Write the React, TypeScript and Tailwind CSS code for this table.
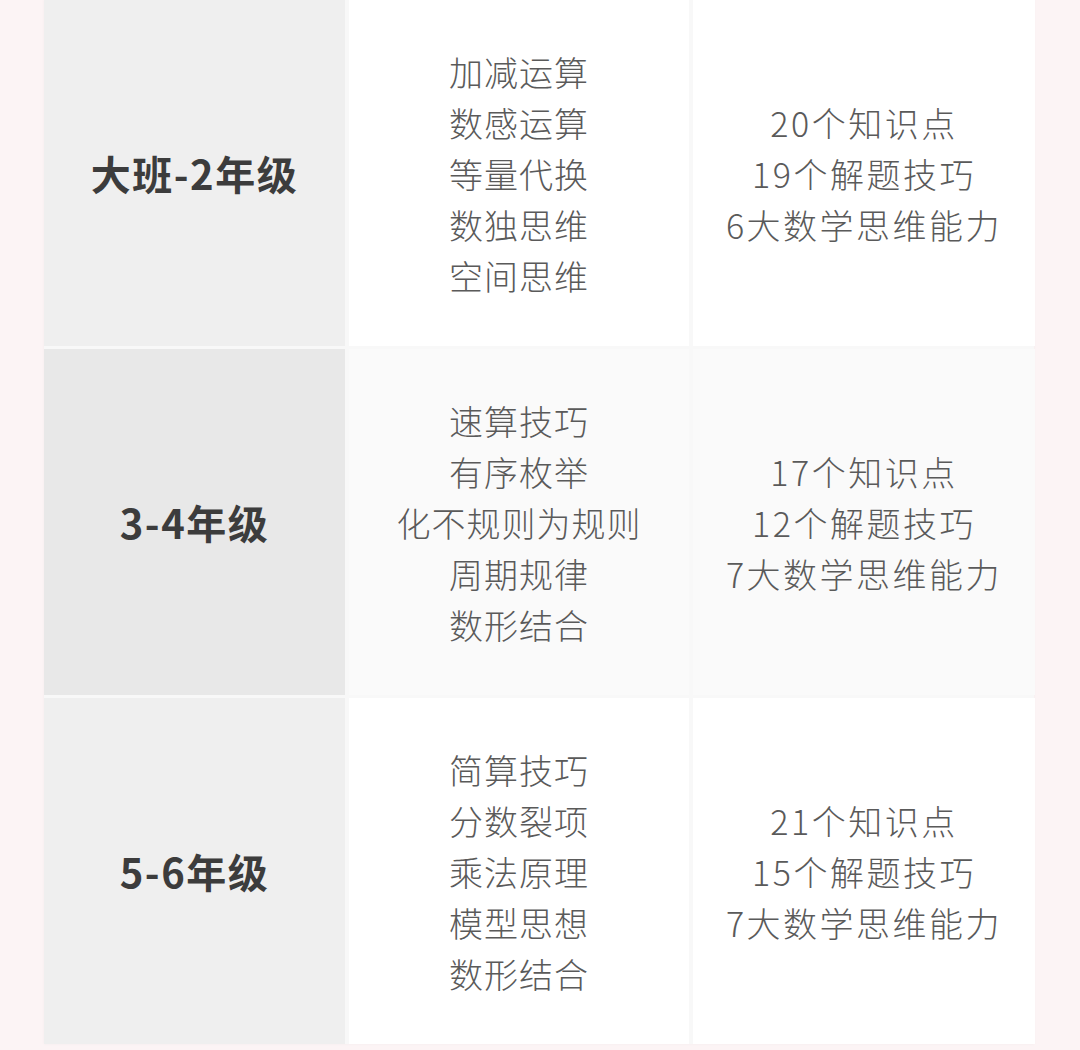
import React from 'react';

interface Row {
  grade: string;
  topics: string[];
  stats: string[];
  shade: 'light' | 'dark';
}

const rows: Row[] = [
  {
    grade: '大班-2年级',
    topics: ['加减运算', '数感运算', '等量代换', '数独思维', '空间思维'],
    stats: ['20个知识点', '19个解题技巧', '6大数学思维能力'],
    shade: 'light',
  },
  {
    grade: '3-4年级',
    topics: ['速算技巧', '有序枚举', '化不规则为规则', '周期规律', '数形结合'],
    stats: ['17个知识点', '12个解题技巧', '7大数学思维能力'],
    shade: 'dark',
  },
  {
    grade: '5-6年级',
    topics: ['简算技巧', '分数裂项', '乘法原理', '模型思想', '数形结合'],
    stats: ['21个知识点', '15个解题技巧', '7大数学思维能力'],
    shade: 'light',
  },
];

const font = { fontFamily: '"Noto Sans CJK SC", "Noto Sans", sans-serif' };

export default function App() {
  return (
    <div className="h-[1050px] w-[1080px] overflow-hidden bg-[#fcf4f5]" style={font}>
      <div className="ml-[44px] grid w-[990px] grid-cols-[301px_340px_342px] gap-x-[4px] gap-y-[3px] bg-[#f8f8f8] shadow-[0_0_3px_rgba(0,0,0,0.04)]">
        {rows.map((row) => {
          const dark = row.shade === 'dark';
          return (
            <React.Fragment key={row.grade}>
              <div
                className={`flex h-[346px] items-center justify-center ${
                  dark ? 'bg-[#e8e8e8]' : 'bg-[#efefef]'
                }`}
              >
                <span className="text-[40px] font-bold tracking-[1.5px] text-[#3c3c3c]">{row.grade}</span>
              </div>
              <div
                className={`flex h-[346px] flex-col items-center justify-center text-[34px] font-light leading-[51px] tracking-[1px] text-[#5a5a5a] ${
                  dark ? 'bg-[#fafafa]' : 'bg-white'
                }`}
              >
                {row.topics.map((t, i) => (
                  <span key={i}>{t}</span>
                ))}
              </div>
              <div
                className={`flex h-[346px] flex-col items-center justify-center text-[34px] font-light leading-[51px] tracking-[2.5px] text-[#5a5a5a] ${
                  dark ? 'bg-[#fafafa]' : 'bg-white'
                }`}
              >
                {row.stats.map((s, i) => (
                  <span key={i}>{s}</span>
                ))}
              </div>
            </React.Fragment>
          );
        })}
      </div>
    </div>
  );
}
